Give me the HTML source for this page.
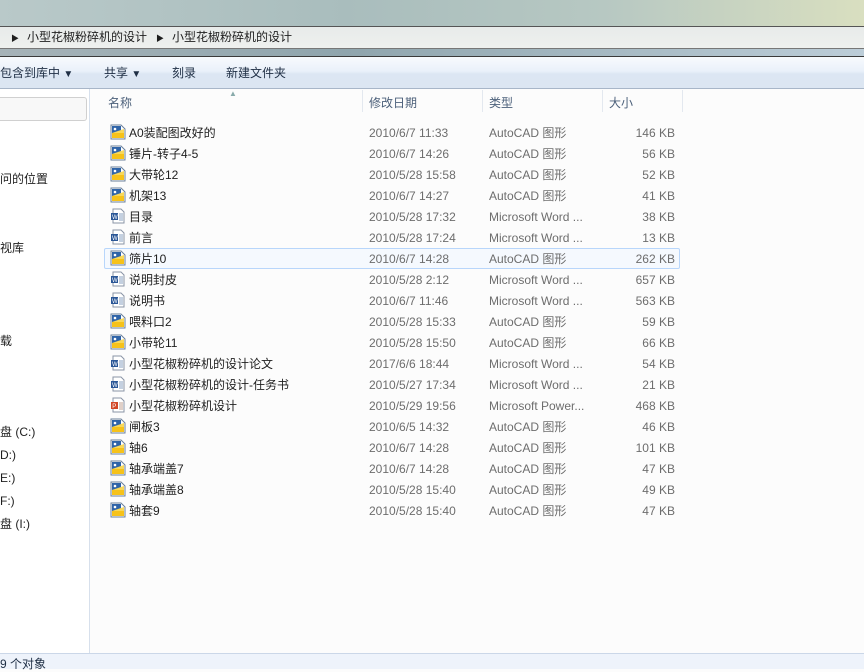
<!DOCTYPE html>
<html><head><meta charset="utf-8"><style>
*{margin:0;padding:0;box-sizing:border-box}
body{width:864px;height:669px;overflow:hidden;background:#fcfcfc;font-family:"Liberation Sans","Noto Sans CJK SC",sans-serif;font-size:12px;color:#1e1e1e;position:relative;line-height:15px}
span,div{line-height:15px}
.bg{position:absolute;left:0;top:0;width:864px;height:26px;background:linear-gradient(90deg,#b9c9c9,#a9bdbd 40%,#b7c8c2 70%,#d9dfc0)}
.addr{position:absolute;left:0;top:26px;width:864px;height:23px;background:linear-gradient(#e8ebea,#eef0ee);border-top:1px solid #555;border-bottom:1px solid #777}
.strip{position:absolute;left:0;top:49px;width:864px;height:7px;background:linear-gradient(90deg,#a6b3b8,#8fa5ad 40%,#bccdd8)}
.tb{position:absolute;left:0;top:56px;width:864px;height:33px;background:linear-gradient(#f7fafd,#eaf1fa 45%,#dce6f3 55%,#dce6f2);border-top:1px solid #3a3a3a;border-bottom:1px solid #a8b6c8}
.tb span{position:absolute;top:9px;font-size:12px;color:#1e2e44}
.nav{position:absolute;left:0;top:89px;width:90px;height:564px;background:#fff;border-right:1px solid #d7e0ec}
.nav div{position:absolute;left:0;font-size:12px}
.hdr{position:absolute;font-size:12px;color:#4c607a}
.row{position:absolute;left:104px;width:576px;height:21px}
.row span{position:absolute;top:4px;white-space:nowrap;line-height:15px}
.c1{left:25px}.c2{left:265px;color:#6d6d6d}.c3{left:385px;color:#6d6d6d}.c4{right:5px;color:#6d6d6d}
.ic{position:absolute;left:6px;top:2px;width:16px;height:16px}
.sel{background:#f5f9fe;border:1px solid #b8d6fb;border-radius:2px}
.status{position:absolute;left:0;top:653px;width:864px;height:16px;background:#eef3fb;border-top:1px solid #cbd7e8}
</style></head><body>
<div class="bg"></div>
<div class="addr">
<span style="position:absolute;left:11px;top:4px;font-size:8px">▶</span>
<span style="position:absolute;left:27px;top:3px">小型花椒粉碎机的设计</span>
<span style="position:absolute;left:156px;top:4px;font-size:8px">▶</span>
<span style="position:absolute;left:172px;top:3px">小型花椒粉碎机的设计</span>
</div>
<div class="strip"></div>
<div class="tb">
<span style="left:0">包含到库中 <small style="font-size:10px">▼</small></span>
<span style="left:104px">共享 <small style="font-size:10px">▼</small></span>
<span style="left:172px">刻录</span>
<span style="left:226px">新建文件夹</span>
</div>
<div class="nav">
<div style="top:8px;width:87px;height:24px;border:1px solid #d0d0d0;border-left:none;border-radius:0 3px 3px 0;background:#f8f8f8"></div>
<div style="top:83px">问的位置</div>
<div style="top:152px">视库</div>
<div style="top:245px">载</div>
<div style="top:336px">盘 (C:)</div>
<div style="top:359px">D:)</div>
<div style="top:382px">E:)</div>
<div style="top:405px">F:)</div>
<div style="top:428px">盘 (I:)</div>
</div>
<div class="hdr" style="left:108px;top:96px">名称</div>
<div style="position:absolute;left:229px;top:86px;font-size:8px;color:#8aa">▲</div>
<div style="position:absolute;left:362px;top:90px;width:1px;height:22px;background:#e3e8ef"></div>
<div class="hdr" style="left:369px;top:96px">修改日期</div>
<div style="position:absolute;left:482px;top:90px;width:1px;height:22px;background:#e3e8ef"></div>
<div class="hdr" style="left:489px;top:96px">类型</div>
<div style="position:absolute;left:602px;top:90px;width:1px;height:22px;background:#e3e8ef"></div>
<div class="hdr" style="left:609px;top:96px">大小</div>
<div style="position:absolute;left:682px;top:90px;width:1px;height:22px;background:#e3e8ef"></div>
<svg width="0" height="0" style="position:absolute"><defs>
<g id="cad"><path d="M1 1h10l4 4v10H1z" fill="#fff" stroke="#6a7f9a"/><path d="M2 2h9v4h3v3H2z" fill="#2f64a8"/><path d="M2 9h12v5H2z" fill="#f6c21a"/><path d="M2 9l12-4v4z" fill="#f8d85a"/><circle cx="5" cy="5" r="1.3" fill="#fff"/></g>
<g id="doc"><path d="M3 1h8l3 3v11H3z" fill="#fff" stroke="#8a94a6"/><rect x="1" y="5" width="7" height="7" fill="#2b5797"/><text x="2" y="11" font-size="6" fill="#fff" font-family="Liberation Sans">W</text><path d="M9 6h4M9 8h4M9 10h4M9 12h4" stroke="#8aa0c0"/></g>
<g id="ppt"><path d="M3 1h8l3 3v11H3z" fill="#fff" stroke="#8a94a6"/><rect x="1" y="5" width="7" height="7" fill="#d24726"/><text x="2.3" y="11" font-size="6" fill="#fff" font-family="Liberation Sans">P</text><path d="M9 6h4M9 8h4M9 10h4M9 12h4" stroke="#c0a090"/></g>
</defs></svg>
<div class="row" style="top:122px"><svg class="ic"><use href="#cad"/></svg><span class="c1">A0装配图改好的</span><span class="c2">2010/6/7 11:33</span><span class="c3">AutoCAD 图形</span><span class="c4">146 KB</span></div>
<div class="row" style="top:143px"><svg class="ic"><use href="#cad"/></svg><span class="c1">锤片-转子4-5</span><span class="c2">2010/6/7 14:26</span><span class="c3">AutoCAD 图形</span><span class="c4">56 KB</span></div>
<div class="row" style="top:164px"><svg class="ic"><use href="#cad"/></svg><span class="c1">大带轮12</span><span class="c2">2010/5/28 15:58</span><span class="c3">AutoCAD 图形</span><span class="c4">52 KB</span></div>
<div class="row" style="top:185px"><svg class="ic"><use href="#cad"/></svg><span class="c1">机架13</span><span class="c2">2010/6/7 14:27</span><span class="c3">AutoCAD 图形</span><span class="c4">41 KB</span></div>
<div class="row" style="top:206px"><svg class="ic"><use href="#doc"/></svg><span class="c1">目录</span><span class="c2">2010/5/28 17:32</span><span class="c3">Microsoft Word ...</span><span class="c4">38 KB</span></div>
<div class="row" style="top:227px"><svg class="ic"><use href="#doc"/></svg><span class="c1">前言</span><span class="c2">2010/5/28 17:24</span><span class="c3">Microsoft Word ...</span><span class="c4">13 KB</span></div>
<div class="row sel" style="top:248px"><svg class="ic" style="left:5px;top:1px"><use href="#cad"/></svg><span class="c1" style="top:3px;left:24px">筛片10</span><span class="c2" style="top:3px;left:264px">2010/6/7 14:28</span><span class="c3" style="top:3px;left:384px">AutoCAD 图形</span><span class="c4" style="top:3px;right:4px">262 KB</span></div>
<div class="row" style="top:269px"><svg class="ic"><use href="#doc"/></svg><span class="c1">说明封皮</span><span class="c2">2010/5/28 2:12</span><span class="c3">Microsoft Word ...</span><span class="c4">657 KB</span></div>
<div class="row" style="top:290px"><svg class="ic"><use href="#doc"/></svg><span class="c1">说明书</span><span class="c2">2010/6/7 11:46</span><span class="c3">Microsoft Word ...</span><span class="c4">563 KB</span></div>
<div class="row" style="top:311px"><svg class="ic"><use href="#cad"/></svg><span class="c1">喂料口2</span><span class="c2">2010/5/28 15:33</span><span class="c3">AutoCAD 图形</span><span class="c4">59 KB</span></div>
<div class="row" style="top:332px"><svg class="ic"><use href="#cad"/></svg><span class="c1">小带轮11</span><span class="c2">2010/5/28 15:50</span><span class="c3">AutoCAD 图形</span><span class="c4">66 KB</span></div>
<div class="row" style="top:353px"><svg class="ic"><use href="#doc"/></svg><span class="c1">小型花椒粉碎机的设计论文</span><span class="c2">2017/6/6 18:44</span><span class="c3">Microsoft Word ...</span><span class="c4">54 KB</span></div>
<div class="row" style="top:374px"><svg class="ic"><use href="#doc"/></svg><span class="c1">小型花椒粉碎机的设计-任务书</span><span class="c2">2010/5/27 17:34</span><span class="c3">Microsoft Word ...</span><span class="c4">21 KB</span></div>
<div class="row" style="top:395px"><svg class="ic"><use href="#ppt"/></svg><span class="c1">小型花椒粉碎机设计</span><span class="c2">2010/5/29 19:56</span><span class="c3">Microsoft Power...</span><span class="c4">468 KB</span></div>
<div class="row" style="top:416px"><svg class="ic"><use href="#cad"/></svg><span class="c1">闸板3</span><span class="c2">2010/6/5 14:32</span><span class="c3">AutoCAD 图形</span><span class="c4">46 KB</span></div>
<div class="row" style="top:437px"><svg class="ic"><use href="#cad"/></svg><span class="c1">轴6</span><span class="c2">2010/6/7 14:28</span><span class="c3">AutoCAD 图形</span><span class="c4">101 KB</span></div>
<div class="row" style="top:458px"><svg class="ic"><use href="#cad"/></svg><span class="c1">轴承端盖7</span><span class="c2">2010/6/7 14:28</span><span class="c3">AutoCAD 图形</span><span class="c4">47 KB</span></div>
<div class="row" style="top:479px"><svg class="ic"><use href="#cad"/></svg><span class="c1">轴承端盖8</span><span class="c2">2010/5/28 15:40</span><span class="c3">AutoCAD 图形</span><span class="c4">49 KB</span></div>
<div class="row" style="top:500px"><svg class="ic"><use href="#cad"/></svg><span class="c1">轴套9</span><span class="c2">2010/5/28 15:40</span><span class="c3">AutoCAD 图形</span><span class="c4">47 KB</span></div>
<div class="status"><span style="position:absolute;left:0;top:3px;color:#1e2e44">9 个对象</span></div>
</body></html>
